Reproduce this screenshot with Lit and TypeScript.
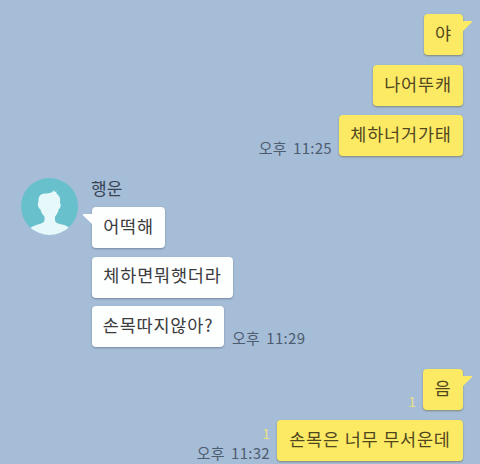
import { LitElement, html, css, svg } from "lit";
import { customElement, property } from "lit/decorators.js";
import { classMap } from "lit/directives/class-map.js";

interface Message {
  text: string;
  width: number;
  tail?: boolean;
  time?: string;
  unread?: string;
}

@customElement("chat-message")
class ChatMessage extends LitElement {
  @property({ attribute: false }) message!: Message;
  @property({ type: Boolean }) mine = false;

  static styles = css`
    :host { display: block; }
    .row { display: flex; align-items: flex-end; height: 41px; }
    .mine { flex-direction: row-reverse; }
    .bubble {
      position: relative;
      box-sizing: border-box;
      flex: none;
      height: 41px;
      padding-bottom: 4px;
      display: flex;
      align-items: center;
      justify-content: center;
      border-radius: 4px;
      background: #fdfefe;
      box-shadow: 0 1px 2px rgba(55, 75, 100, 0.45);
      color: #3b3b3d;
      font-size: 17.5px;
      line-height: 24px;
      letter-spacing: 0.8px;
      white-space: pre;
    }
    .mine .bubble {
      padding-bottom: 3px;
      background: #fcea65;
      color: #51471f;
      box-shadow: 0 1px 2px rgba(100, 100, 55, 0.6);
    }
    .tail { position: absolute; left: -10px; top: 6px; }
    .mine .tail { left: auto; right: -10px; top: 6px; }
    .meta {
      display: flex;
      flex-direction: column;
      margin: 0 0 0 8px;
      font-size: 15px;
      line-height: 19px;
      color: #4e5c70;
      white-space: pre;
    }
    .mine .meta { align-items: flex-end; margin: 0 7px -1px 0; }
    .time { word-spacing: 2.5px; letter-spacing: 0.3px; }
    .unread { color: #e9e08a; font-size: 14px; }
  `;

  render() {
    const m = this.message;
    return html`
      <div class=${classMap({ row: true, mine: this.mine })}>
        <div class="bubble" style="width:${m.width}px">
          ${m.tail
            ? html`<svg class="tail" width="11" height="13" viewBox="0 0 11 13">
                ${this.mine
                  ? svg`<path d="M0 1H9.5Q10.8 1.2 9.8 2.2L0 12Z" fill="#fcea65"/>`
                  : svg`<path d="M11 1H1.5Q0 1.4 1.2 2.4L11 12Z" fill="#fdfefe"/>`}
              </svg>`
            : ""}
          <span>${m.text}</span>
        </div>
        <div class="meta">
          ${m.unread ? html`<span class="unread">${m.unread}</span>` : ""}
          ${m.time ? html`<span class="time">${m.time}</span>` : ""}
        </div>
      </div>
    `;
  }
}

@customElement("app-root")
class AppRoot extends LitElement {
  static styles = css`
    :host {
      display: block;
      box-sizing: border-box;
      height: 464px;
      overflow: hidden;
      padding: 14px 17px 0 22px;
      background: #a6bdd7;
      font-family: "Noto Sans CJK KR", sans-serif;
    }
    .group { display: flex; flex-direction: column; gap: 9.5px; }
    .received { display: flex; margin: 21px 0 22px; }
    .received .group { gap: 8.5px; }
    .avatar { flex: none; width: 57px; height: 57px; margin: 1px 14px 0 -1px; }
    .name {
      height: 24px;
      margin: 0 0 6px -1px;
      font-size: 17px;
      line-height: 21px;
      color: #374253;
    }
  `;

  first: Message[] = [
    { text: "야", width: 39, tail: true },
    { text: "나어뚜캐", width: 90 },
    { text: "체하너거가태", width: 124, time: "오후 11:25" },
  ];
  received: Message[] = [
    { text: "어떡해", width: 73, tail: true },
    { text: "체하면뭐햇더라", width: 141 },
    { text: "손목따지않아?", width: 132, time: "오후 11:29" },
  ];
  last: Message[] = [
    { text: "음", width: 40, tail: true, unread: "1" },
    { text: "손목은 너무 무서운데", width: 186, time: "오후 11:32", unread: "1" },
  ];

  private list(items: Message[], mine: boolean) {
    return html`<div class="group">
      ${items.map((m) => html`<chat-message .message=${m} ?mine=${mine}></chat-message>`)}
    </div>`;
  }

  render() {
    return html`
      ${this.list(this.first, true)}
      <div class="received">
        <svg class="avatar" viewBox="0 0 57 57">
          <defs><clipPath id="disc"><circle cx="28.5" cy="28.5" r="28.5" /></clipPath></defs>
          <g clip-path="url(#disc)">
            <rect width="57" height="57" fill="#68c0cd" />
            <path
              fill="#e7f8fb"
              d="M17.5 24C17 17.5 20 15.8 24 15.5C29 15.4 31 14.5 33.5 12C33 14 33.5 14.5 35.5 13.2C35 15 35.5 15.5 36.5 16.5C39 18.5 39.5 21 39 25C40.5 26 39.5 30.5 37.8 31C37 34.5 35.5 37 34 38.5V42C34 45 38 46 43 47C46 48 48 49 49 51V57H8V51C10 48.5 14 47.5 17 46.5C21 45.5 23.5 44.5 23.5 42V38.5C21.5 36.5 20 34 19.3 31C17.3 30.5 16 26 17.5 24Z"
            />
          </g>
        </svg>
        <div>
          <div class="name">행운</div>
          ${this.list(this.received, false)}
        </div>
      </div>
      ${this.list(this.last, true)}
    `;
  }
}
